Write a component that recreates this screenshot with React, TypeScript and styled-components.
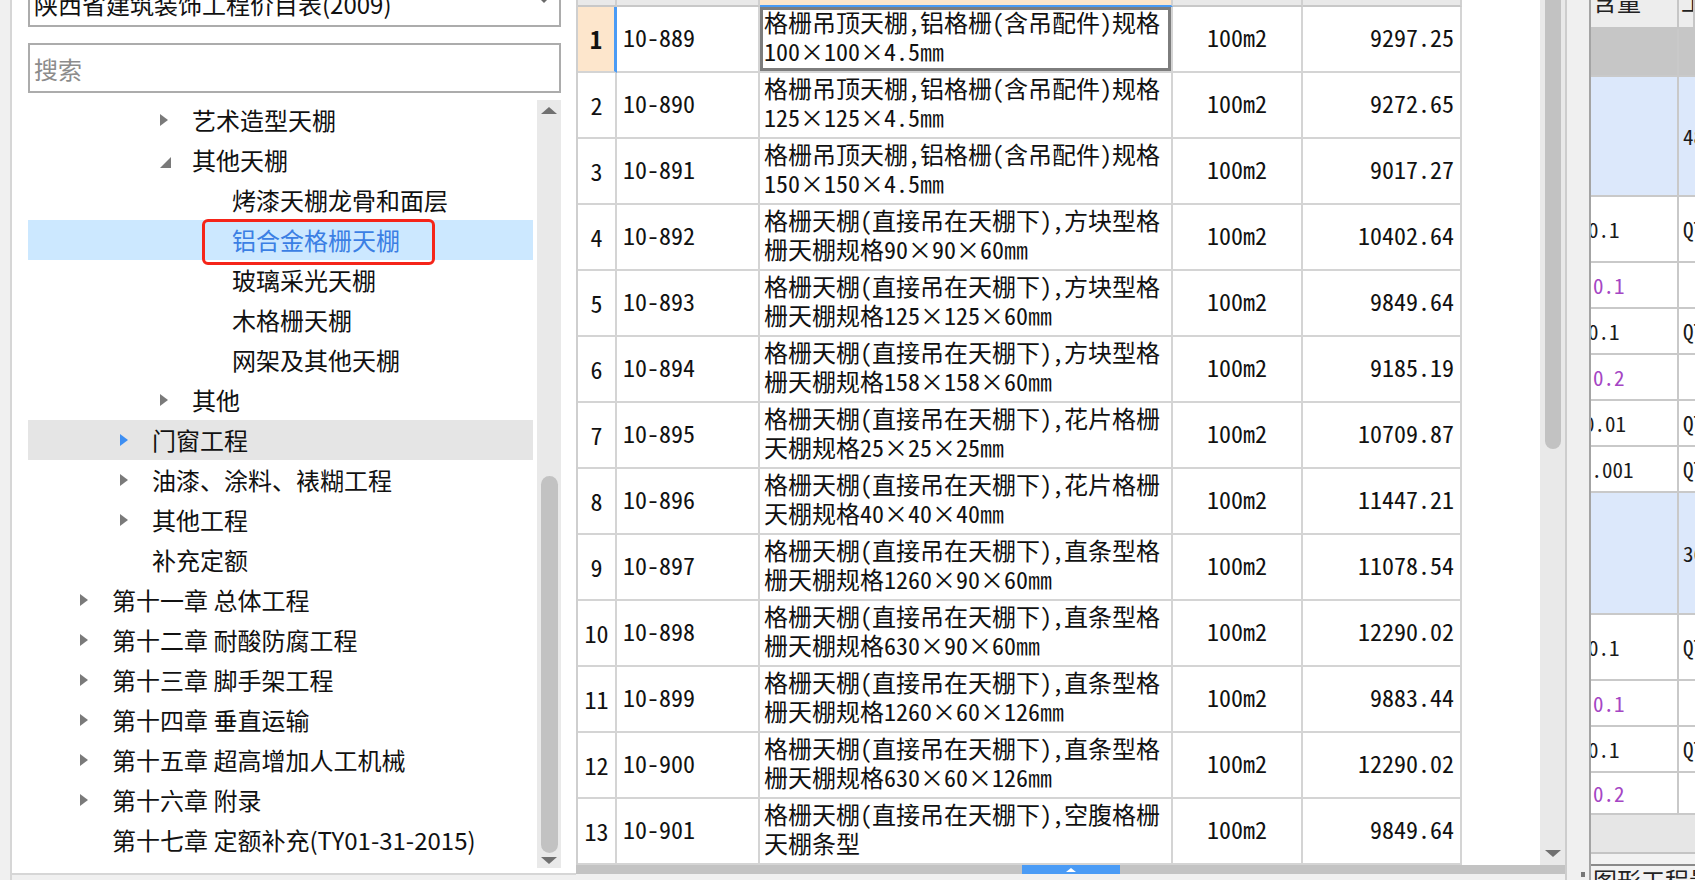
import styled, { createGlobalStyle } from 'styled-components'

const SANS = '"Noto Sans CJK SC", "Noto Sans", sans-serif'
const MONO = '"Noto Sans Mono CJK SC", "Noto Sans CJK SC", "Liberation Mono", monospace'

const GlobalStyle = createGlobalStyle`
  html, body {
    margin: 0;
    padding: 0;
    overflow: hidden;
    background: #f0f0f0;
  }
  * {
    box-sizing: border-box;
  }
`

type Arrow = 'closed' | 'open' | 'hover'
type NodeState = 'selected' | 'hover'

interface TreeNode {
  label: string
  level: number
  arrow?: Arrow
  state?: NodeState
}

const treeNodes: TreeNode[] = [
  { label: '艺术造型天棚', level: 3, arrow: 'closed' },
  { label: '其他天棚', level: 3, arrow: 'open' },
  { label: '烤漆天棚龙骨和面层', level: 4 },
  { label: '铝合金格栅天棚', level: 4, state: 'selected' },
  { label: '玻璃采光天棚', level: 4 },
  { label: '木格栅天棚', level: 4 },
  { label: '网架及其他天棚', level: 4 },
  { label: '其他', level: 3, arrow: 'closed' },
  { label: '门窗工程', level: 2, arrow: 'hover', state: 'hover' },
  { label: '油漆、涂料、裱糊工程', level: 2, arrow: 'closed' },
  { label: '其他工程', level: 2, arrow: 'closed' },
  { label: '补充定额', level: 2 },
  { label: '第十一章 总体工程', level: 1, arrow: 'closed' },
  { label: '第十二章 耐酸防腐工程', level: 1, arrow: 'closed' },
  { label: '第十三章 脚手架工程', level: 1, arrow: 'closed' },
  { label: '第十四章 垂直运输', level: 1, arrow: 'closed' },
  { label: '第十五章 超高增加人工机械', level: 1, arrow: 'closed' },
  { label: '第十六章 附录', level: 1, arrow: 'closed' },
  { label: '第十七章 定额补充(TY01-31-2015)', level: 1 },
]

const A = '格栅吊顶天棚,铝格栅(含吊配件)规格'
const B = '格栅天棚(直接吊在天棚下),方块型格'
const C = '格栅天棚(直接吊在天棚下),花片格栅'
const D = '格栅天棚(直接吊在天棚下),直条型格'
const E = '格栅天棚(直接吊在天棚下),空腹格栅'

const quotaRows = [
  { code: '10-889', l1: A, l2: '100×100×4.5㎜', price: '9297.25' },
  { code: '10-890', l1: A, l2: '125×125×4.5㎜', price: '9272.65' },
  { code: '10-891', l1: A, l2: '150×150×4.5㎜', price: '9017.27' },
  { code: '10-892', l1: B, l2: '栅天棚规格90×90×60㎜', price: '10402.64' },
  { code: '10-893', l1: B, l2: '栅天棚规格125×125×60㎜', price: '9849.64' },
  { code: '10-894', l1: B, l2: '栅天棚规格158×158×60㎜', price: '9185.19' },
  { code: '10-895', l1: C, l2: '天棚规格25×25×25㎜', price: '10709.87' },
  { code: '10-896', l1: C, l2: '天棚规格40×40×40㎜', price: '11447.21' },
  { code: '10-897', l1: D, l2: '栅天棚规格1260×90×60㎜', price: '11078.54' },
  { code: '10-898', l1: D, l2: '栅天棚规格630×90×60㎜', price: '12290.02' },
  { code: '10-899', l1: D, l2: '栅天棚规格1260×60×126㎜', price: '9883.44' },
  { code: '10-900', l1: D, l2: '栅天棚规格630×60×126㎜', price: '12290.02' },
  { code: '10-901', l1: E, l2: '天棚条型', price: '9849.64' },
]

type RKind = 'group' | 'blue' | 'item' | 'sub'

interface RightRow {
  kind: RKind
  h: number
  a?: string
  b?: string
  shift?: number
}

const rightRows: RightRow[] = [
  { kind: 'group', h: 48 },
  { kind: 'blue', h: 120, b: '485.3' },
  { kind: 'item', h: 66, a: '0.1', b: 'QT', shift: -3 },
  { kind: 'sub', h: 46, a: '0.1' },
  { kind: 'item', h: 46, a: '0.1', b: 'QT', shift: -3 },
  { kind: 'sub', h: 46, a: '0.2' },
  { kind: 'item', h: 46, a: '0.01', b: 'QT', shift: -7 },
  { kind: 'item', h: 46, a: '0.001', b: 'QT', shift: -10 },
  { kind: 'blue', h: 122, b: '36.8' },
  { kind: 'item', h: 66, a: '0.1', b: 'QT', shift: -3 },
  { kind: 'sub', h: 46, a: '0.1' },
  { kind: 'item', h: 46, a: '0.1', b: 'QT', shift: -3 },
  { kind: 'sub', h: 42, a: '0.2' },
]

export default function App() {
  return (
    <>
      <GlobalStyle />
      <Page>
        <Gutter />
        <LeftPanel>
          <ComboBox>
            <span>陕西省建筑装饰工程价目表(2009)</span>
            <DropArrow />
          </ComboBox>
          <SearchInput placeholder='搜索' readOnly />
          <TreeArea>
            <TreeList>
              {treeNodes.map((n) => (
                <TreeRow key={n.label} level={n.level} state={n.state}>
                  <ArrowSlot>{n.arrow && <TreeArrow kind={n.arrow} />}</ArrowSlot>
                  <NodeLabel state={n.state}>{n.label}</NodeLabel>
                </TreeRow>
              ))}
            </TreeList>
            <VScroll>
              <ScrollArrow dir='up' />
              <Spacer />
              <LeftThumb />
              <ScrollArrow dir='down' />
            </VScroll>
          </TreeArea>
        </LeftPanel>

        <TablePane>
          <GridWrap>
            <Grid>
              <HeaderRow>
                <HeadCell />
                <HeadCell />
                <HeadCell active />
                <HeadCell />
                <HeadCell />
                <Filler />
              </HeaderRow>
              {quotaRows.map((r, i) => (
                <DataRow key={r.code}>
                  <NumCell current={i === 0}>{i + 1}</NumCell>
                  <CodeCell>{r.code}</CodeCell>
                  <NameCell selected={i === 0}>
                    <div>{r.l1}</div>
                    <div>{r.l2}</div>
                  </NameCell>
                  <UnitCell>100m2</UnitCell>
                  <PriceCell>{r.price}</PriceCell>
                  <Filler />
                </DataRow>
              ))}
            </Grid>
            <TableVScroll>
              <TableThumb />
              <Spacer />
              <ScrollArrow dir='down' />
            </TableVScroll>
          </GridWrap>
          <HScroll>
            <HThumb>
              <HThumbArrow />
            </HThumb>
          </HScroll>
        </TablePane>

        <Splitter>
          <Grip />
        </Splitter>

        <RightPanel>
          <RHeader>
            <RHeadCell>含量</RHeadCell>
            <RHeadCell>工</RHeadCell>
          </RHeader>
          {rightRows.map((r, i) => (
            <RRow key={i} kind={r.kind} style={{ height: r.h }}>
              <RCell kind={r.kind} first>
                {r.a && <RValue kind={r.kind} style={{ marginLeft: r.shift ?? 2 }}>{r.a}</RValue>}
              </RCell>
              <RCell kind={r.kind}>{r.b && <RValue kind={r.kind}>{r.b}</RValue>}</RCell>
            </RRow>
          ))}
          <RFiller />
          <RTabBar>
            <RTab>图形工程量</RTab>
          </RTabBar>
        </RightPanel>
      </Page>
    </>
  )
}

const Page = styled.div`
  display: flex;
  width: 1695px;
  height: 880px;
  overflow: hidden;
  background: #f0f0f0;
`

const Gutter = styled.div`
  width: 12px;
  flex-shrink: 0;
  border-right: 2px solid #d6d6d6;
`

const LeftPanel = styled.div`
  width: 564px;
  height: 875px;
  flex-shrink: 0;
  display: flex;
  flex-direction: column;
  padding: 0 15px 0 16px;
  background: #fff;
  border-bottom: 2px solid #d6d6d6;
  font-family: ${SANS};
`

const ComboBox = styled.div`
  margin-top: -21px;
  height: 48px;
  border: 2px solid #acacac;
  display: flex;
  align-items: center;
  justify-content: space-between;
  padding: 0 10px 0 4px;
  font-size: 24px;
  color: #111;
  white-space: nowrap;
`

const DropArrow = styled.div`
  align-self: flex-start;
  margin-top: 17px;
  width: 0;
  height: 0;
  border-left: 5px solid transparent;
  border-right: 5px solid transparent;
  border-top: 5px solid #6a6a6a;
`

const SearchInput = styled.input`
  margin-top: 16px;
  height: 50px;
  width: 100%;
  border: 2px solid #acacac;
  padding: 0 4px;
  font-family: ${SANS};
  font-size: 24px;
  outline: none;
  background: #fff;

  &::placeholder {
    color: #8c8c8c;
  }
`

const TreeArea = styled.div`
  margin-top: 7px;
  height: 768px;
  display: flex;
`

const TreeList = styled.div`
  flex: 1;
  margin-right: 4px;
  display: flex;
  flex-direction: column;
  overflow: hidden;
`

const TreeRow = styled.div<{ level: number; state?: NodeState }>`
  height: 40px;
  flex-shrink: 0;
  display: flex;
  align-items: center;
  padding-left: ${({ level }) => 52 + (level - 1) * 40}px;
  background: ${({ state }) => (state === 'selected' ? '#cce8ff' : state === 'hover' ? '#e5e5e5' : 'transparent')};
`

const ArrowSlot = styled.div`
  width: 32px;
  flex-shrink: 0;
  display: flex;
  align-items: center;
`

const TreeArrow = styled.div<{ kind: Arrow }>`
  width: 0;
  height: 0;
  ${({ kind }) =>
    kind === 'open'
      ? `border-left: 11px solid transparent; border-bottom: 11px solid #7a7a7a; margin-top: 4px;`
      : `border-top: 6px solid transparent; border-bottom: 6px solid transparent;
         border-left: 8px solid ${kind === 'hover' ? '#3d8ef2' : '#7a7a7a'};`}
`

const NodeLabel = styled.span<{ state?: NodeState }>`
  position: relative;
  font-size: 24px;
  line-height: 32px;
  white-space: nowrap;
  color: ${({ state }) => (state === 'selected' ? '#3b7fe4' : '#111')};

  ${({ state }) =>
    state === 'selected' &&
    `&::after {
      content: '';
      position: absolute;
      top: -5px;
      bottom: -9px;
      left: -30px;
      right: -35px;
      border: 3px solid #f52419;
      border-radius: 6px;
    }`}
`

const VScroll = styled.div`
  width: 24px;
  flex-shrink: 0;
  background: #e9e9e9;
  display: flex;
  flex-direction: column;
  align-items: center;
`

const Spacer = styled.div`
  flex: 1;
`

const ScrollArrow = styled.div<{ dir: 'up' | 'down' }>`
  width: 0;
  height: 0;
  border-left: 8px solid transparent;
  border-right: 8px solid transparent;
  ${({ dir }) =>
    dir === 'up'
      ? `border-bottom: 7px solid #707070; margin: 7px 0 0;`
      : `border-top: 7px solid #707070; margin: 4px 0 4px;`}
`

const LeftThumb = styled.div`
  width: 17px;
  height: 377px;
  border-radius: 9px;
  background: #c2c2c2;
`

const TablePane = styled.div`
  width: 989px;
  height: 874px;
  flex-shrink: 0;
  display: flex;
  flex-direction: column;
`

const GridWrap = styled.div`
  height: 865px;
  display: flex;
`

const Grid = styled.div`
  flex: 1;
  border-left: 2px solid #cfcfcf;
  background: #fff;
  overflow: hidden;
  font-family: ${MONO};
  font-size: 24px;
  color: #111;
`

const columns = '39px 143px 413px 130px 159px 1fr'

const HeaderRow = styled.div`
  display: grid;
  grid-template-columns: ${columns};
  height: 7px;
`

const HeadCell = styled.div<{ active?: boolean }>`
  background: ${({ active }) => (active ? '#fde6cc' : '#e9e9e9')};
  border-right: 2px solid #d0d0d0;
  border-bottom: 2px solid ${({ active }) => (active ? '#4a9bf5' : '#c8c8c8')};
`

const DataRow = styled.div`
  display: grid;
  grid-template-columns: ${columns};
  height: 66px;
`

const Cell = styled.div`
  border-right: 2px solid #d4d4d4;
  border-bottom: 2px solid #d4d4d4;
  display: flex;
  align-items: center;
  white-space: nowrap;
  overflow: hidden;
`

const NumCell = styled(Cell)<{ current?: boolean }>`
  justify-content: center;
  padding-bottom: 2px;
  background: ${({ current }) => (current ? '#fde6cc' : '#fff')};
  font-weight: ${({ current }) => (current ? 700 : 400)};
  ${({ current }) => current && `border-right: 3px solid #4a9bf5;`}
`

const CodeCell = styled(Cell)`
  padding: 0 0 6px 6px;
`

const NameCell = styled(Cell)<{ selected?: boolean }>`
  flex-direction: column;
  align-items: flex-start;
  justify-content: flex-start;
  padding: 0 0 0 4px;
  line-height: 29px;
  ${({ selected }) => selected && `box-shadow: inset 0 0 0 3px #7d7d7d;`}
`

const UnitCell = styled(Cell)`
  justify-content: center;
  padding-bottom: 6px;
`

const PriceCell = styled(Cell)`
  justify-content: flex-end;
  padding: 0 6px 6px 0;
`

const Filler = styled.div`
  background: #fff;
`

const TableVScroll = styled.div`
  width: 25px;
  flex-shrink: 0;
  background: #e9e9e9;
  display: flex;
  flex-direction: column;
  align-items: center;
  padding-bottom: 4px;
`

const TableThumb = styled.div`
  width: 16px;
  height: 449px;
  border-radius: 0 0 8px 8px;
  background: #c2c2c2;
`

const HScroll = styled.div`
  height: 9px;
  background: #c3c3c3;
  display: flex;
  padding-left: 446px;
`

const HThumb = styled.div`
  width: 98px;
  height: 100%;
  background: #4a9bf5;
  display: flex;
  align-items: center;
  justify-content: center;
`

const HThumbArrow = styled.div`
  width: 0;
  height: 0;
  border-left: 5px solid transparent;
  border-right: 5px solid transparent;
  border-bottom: 4px solid #fff;
`

const Splitter = styled.div`
  width: 24px;
  flex-shrink: 0;
  background: #f0f0f0;
  border-left: 2px solid #cdcdcd;
  display: flex;
  flex-direction: column;
  justify-content: flex-end;
  align-items: flex-end;
  padding: 0 4px 3px 0;
`

const Grip = styled.div`
  width: 4px;
  height: 5px;
  background: #777;
`

const RightPanel = styled.div`
  flex: 1;
  min-width: 0;
  display: flex;
  flex-direction: column;
  border-left: 2px solid #a4a4a4;
  background: #fff;
  overflow: hidden;
  font-family: ${MONO};
`

const rColumns = '88px 1fr'

const RHeader = styled.div`
  height: 29px;
  flex-shrink: 0;
  display: grid;
  grid-template-columns: ${rColumns};
  background: #ededed;
  border-bottom: 2px solid #c6c6c6;
`

const RHeadCell = styled.div`
  font-family: ${SANS};
  font-size: 24px;
  line-height: 30px;
  margin-top: -14px;
  padding-left: 2px;
  white-space: nowrap;
  overflow: hidden;
  color: #222;
  border-right: 2px solid #c6c6c6;
`

const rowBg = (kind: RKind) => (kind === 'group' ? '#c6c6c6' : kind === 'blue' ? '#dce8fb' : '#fff')

const RRow = styled.div<{ kind: RKind }>`
  flex-shrink: 0;
  display: grid;
  grid-template-columns: ${rColumns};
  background: ${({ kind }) => rowBg(kind)};
`

const RCell = styled.div<{ kind: RKind; first?: boolean }>`
  display: flex;
  align-items: center;
  overflow: hidden;
  white-space: nowrap;
  border-bottom: 2px solid #c9c9c9;
  border-right: ${({ first }) => (first ? '2px solid #c9c9c9' : 'none')};
  padding-left: ${({ first }) => (first ? 0 : 4)}px;
`

const RValue = styled.span<{ kind: RKind }>`
  font-size: 21px;
  color: ${({ kind }) => (kind === 'sub' ? '#a546c4' : '#1a1a1a')};
`

const RFiller = styled.div`
  flex: 1;
  background: #e6e6e6;
  border-bottom: 2px solid #c4c4c4;
`

const RTabBar = styled.div`
  height: 26px;
  flex-shrink: 0;
  background: #f2f2f2;
  padding-top: 10px;
  overflow: hidden;
`

const RTab = styled.div`
  border-top: 2px solid #8a8a8a;
  font-family: ${SANS};
  font-size: 24px;
  line-height: 28px;
  padding-left: 2px;
  white-space: nowrap;
  color: #222;
`
